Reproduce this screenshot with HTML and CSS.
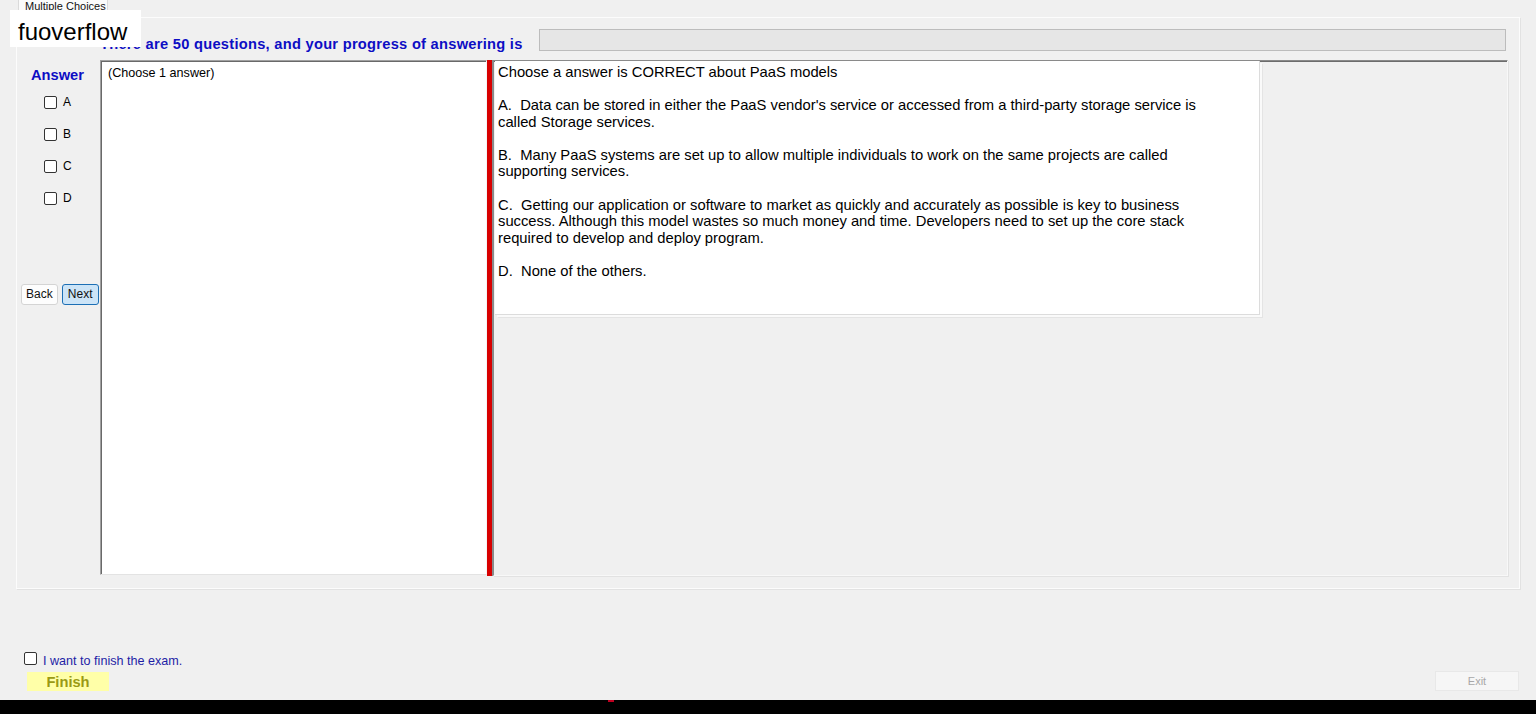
FILE: index.html
```html
<!DOCTYPE html>
<html lang="en">
<head>
<meta charset="utf-8">
<title>Multiple Choices</title>
<link rel="stylesheet" href="styles.css">
</head>
<body>
<div class="window">
  <div class="tabs"><span class="tab">Multiple Choices</span></div>

  <div class="tabpage">
    <div class="progress-row">
      <span class="count">There are 50 questions, and your progress of answering is</span>
      <div class="progress"></div>
    </div>

    <div class="work">
      <aside class="answers">
        <div class="answers-title">Answer</div>
        <ul class="options">
          <li><span class="box"></span><span>A</span></li>
          <li><span class="box"></span><span>B</span></li>
          <li><span class="box"></span><span>C</span></li>
          <li><span class="box"></span><span>D</span></li>
        </ul>
        <div class="nav">
          <button class="btn">Back</button>
          <button class="btn btn-focus">Next</button>
        </div>
      </aside>

      <div class="question-pane">(Choose 1 answer)</div>
      <div class="splitter"></div>

      <div class="content-pane">
        <div class="rtb">
          <p>Choose a answer is CORRECT about PaaS models</p>
          <p>A.&nbsp; Data can be stored in either the PaaS vendor's service or accessed from a third-party storage service is<br>called Storage services.</p>
          <p>B.&nbsp; Many PaaS systems are set up to allow multiple individuals to work on the same projects are called<br>supporting services.</p>
          <p>C.&nbsp; Getting our application or software to market as quickly and accurately as possible is key to business<br>success. Although this model wastes so much money and time. Developers need to set up the core stack<br>required to develop and deploy program.</p>
          <p>D.&nbsp; None of the others.</p>
        </div>
      </div>
    </div>
  </div>

  <div class="confirm">
    <span class="box"></span>
    <span class="confirm-label">I want to finish the exam.</span>
  </div>
  <div class="actions">
    <button class="finish">Finish</button>
    <button class="exit" disabled>Exit</button>
  </div>

  <div class="taskbar"><span class="task-mark"></span></div>

  <div class="watermark">fuoverflow</div>
</div>
</body>
</html>
```

FILE: styles.css
```css
html, body {
  margin: 0;
  padding: 0;
}

body {
  background: #f0f0f0;
  font-family: "Liberation Sans", Arial, sans-serif;
  color: #000;
  overflow: hidden;
}

.window {
  position: relative;
  width: 1536px;
  height: 714px;
  display: flex;
  flex-direction: column;
}

/* tab strip */
.tabs {
  height: 17px;
  display: flex;
}

.tab {
  margin-left: 18px;
  width: 88px;
  height: 13px;
  background: #fbfbfb;
  border: 1px solid #dadada;
  border-top: none;
  font-size: 11px;
  line-height: 12px;
  text-indent: 6px;
  white-space: nowrap;
  color: #111;
}

.tabpage {
  margin-left: 16px;
  width: 1502px;
  height: 571px;
  border: 1px solid #fcfcfc;
  box-shadow: 1px 1px 0 #e2e2e2;
  display: flex;
  flex-direction: column;
}

/* progress row */
.progress-row {
  margin-top: 11px;
  height: 22px;
  padding-left: 83px;
  padding-right: 13px;
  display: flex;
  align-items: flex-end;
  gap: 16px;
}

.count {
  font-size: 14.67px;
  font-weight: bold;
  letter-spacing: 0.27px;
  line-height: 17px;
  margin-bottom: -2px;
  color: #0d0dc4;
  white-space: nowrap;
}

.progress {
  flex: 1;
  align-self: stretch;
  background: #e6e6e6;
  border: 1px solid #bcbcbc;
}

/* main work area */
.work {
  margin-top: 9px;
  height: 516px;
  display: flex;
}

.answers {
  width: 83px;
  display: flex;
  flex-direction: column;
  padding-top: 7px;
  box-sizing: border-box;
}

.answers-title {
  font-size: 14.67px;
  font-weight: bold;
  line-height: 17px;
  color: #0d0dc4;
  padding-left: 14px;
}

.options {
  list-style: none;
  margin: 12px 0 0 27px;
  padding: 0;
  display: flex;
  flex-direction: column;
  gap: 19px;
}

.options li {
  display: flex;
  align-items: center;
  gap: 6px;
  height: 13px;
  font-size: 12px;
}

.box {
  width: 11px;
  height: 11px;
  border: 1px solid #333;
  border-radius: 2px;
  background: #fff;
  flex: none;
}

.nav {
  margin-top: 79px;
  padding-left: 4px;
  display: flex;
  gap: 4px;
}

.btn {
  height: 21px;
  padding: 0 4px;
  font-family: inherit;
  font-size: 12px;
  background: #fdfdfd;
  border: 1px solid #d4d4d4;
  border-radius: 3px;
  color: #111;
}

.btn-focus {
  background: #cce4f7;
  border-color: #1c6fb5;
  width: 37px;
}

.question-pane {
  width: 387px;
  box-sizing: border-box;
  background: #fff;
  border: 1px solid;
  border-color: #a0a0a0 #f4f4f4 #e3e3e3 #a0a0a0;
  box-shadow: inset 1px 1px 0 #696969;
  padding: 5px 7px;
  font-size: 12.6px;
  line-height: 15px;
  height: 515px;
}

.splitter {
  width: 5px;
  height: 516px;
  background: #d80000;
  border-right: 1px solid #8a8a8a;
}

.content-pane {
  width: 1013px;
  height: 514px;
  border: 1px solid;
  border-color: #8a8a8a #f8f8f8 #f8f8f8 #8a8a8a;
  box-shadow: inset 0 1px 0 #6c6c6c, 1px 1px 0 #e2e2e2;
}

.rtb {
  width: 761px;
  height: 250px;
  margin-left: 1px;
  padding: 3px 0 0 3px;
  background: #fff;
  border-right: 1px solid #dcdcdc;
  border-bottom: 1px solid #dcdcdc;
  box-shadow: 2px 2px 0 #fafafa, 3px 3px 0 #e4e4e4;
  font-size: 14.77px;
  line-height: 16.58px;
}

.rtb p {
  margin: 0 0 16.58px;
}

/* finish controls */
.confirm {
  margin-top: 63px;
  height: 14px;
  padding-left: 24px;
  display: flex;
  align-items: center;
  gap: 6px;
}

.confirm .box {
  margin-top: -2px;
}

.confirm-label {
  font-size: 12.6px;
  color: #1e1ea6;
  margin-top: 3px;
}

.actions {
  margin-top: 5px;
  height: 21px;
  display: flex;
  justify-content: space-between;
  align-items: flex-start;
  padding: 0 17px 0 27px;
}

.finish {
  margin-top: 1px;
  width: 82px;
  height: 19px;
  border: none;
  background: #ffffa8;
  font-family: inherit;
  font-size: 14.67px;
  font-weight: bold;
  color: #9a9a14;
  padding: 0;
}

.exit {
  width: 84px;
  height: 20px;
  background: #f6f6f6;
  border: 1px solid #e8e8e8;
  font-family: inherit;
  font-size: 11px;
  color: #a8a8a8;
  padding: 0;
}

.taskbar {
  margin-top: 8px;
  height: 14px;
  background: #000;
  display: flex;
}

.task-mark {
  margin-left: 608px;
  width: 6px;
  height: 2px;
  background: #c00020;
}

.watermark {
  position: absolute;
  left: 10px;
  top: 10px;
  width: 131px;
  height: 37px;
  overflow: hidden;
  background: #fff;
  font-size: 24px;
  line-height: 44px;
  padding-left: 8px;
  box-sizing: border-box;
  color: #000;
}
```
